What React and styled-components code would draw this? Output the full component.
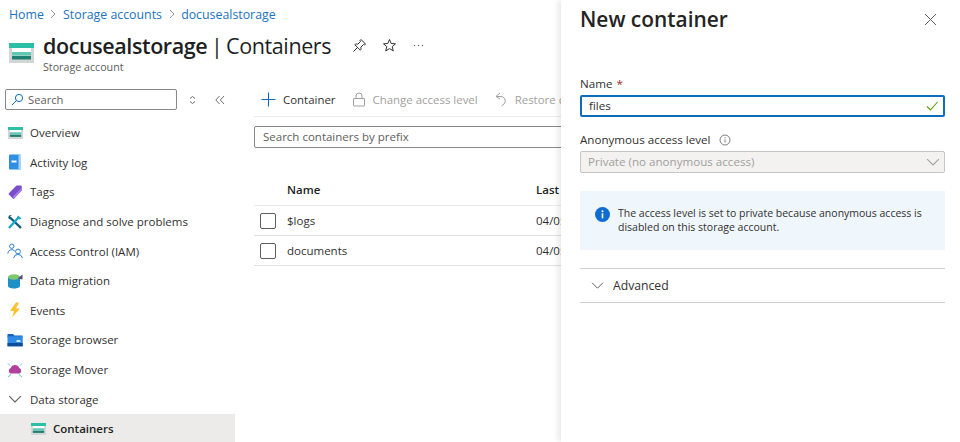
import React from 'react';
import styled, { createGlobalStyle } from 'styled-components';

const Global = createGlobalStyle`
  html, body { margin: 0; padding: 0; background: #fff; }
  * { box-sizing: border-box; }
  body { font-family: "Open Sans", "Noto Sans", "Liberation Sans", sans-serif; color: #323130; }
`;

const Page = styled.div`
  position: relative;
  width: 960px;
  height: 442px;
  overflow: hidden;
  background: #fff;
  display: flex;
  flex-direction: column;
`;
const Breadcrumb = styled.nav`
  height: 28px;
  padding-left: 9px;
  display: flex;
  align-items: center;
  gap: 5.6px;
  font-size: 12.35px;
`;
const Crumb = styled.span`color: #1b73c0;`;
const Header = styled.header`
  height: 51px;
  padding-left: 9px;
  display: flex;
  align-items: flex-start;
`;
const TitleIcon = styled.div`
  width: 25px;
  margin-top: 15px;
  margin-right: 9px;
  line-height: 0;
`;
const TitleBlock = styled.div`
  display: flex;
  flex-direction: column;
`;
const TitleRow = styled.div`
  display: flex;
  align-items: center;
  height: 35px;
`;
const Title = styled.h1`
  margin: 0;
  font-size: 21.5px;
  font-weight: 400;
  letter-spacing: -0.4px;
  word-spacing: -1.5px;
  color: #201f1e;
  white-space: nowrap;
  b { font-weight: 600; }
`;
const TitleActions = styled.div`
  display: flex;
  align-items: center;
  gap: 15px;
  margin-left: 21px;
  color: #323130;
  line-height: 0;
`;
const Subtitle = styled.div`
  font-size: 10.7px;
  color: #605e5c;
  margin-top: -3px;
`;
const Body = styled.div`
  flex: 1;
  display: flex;
  min-height: 0;
`;
const Sidebar = styled.aside`
  width: 235px;
  flex: none;
  padding-top: 10px;
`;
const SideTools = styled.div`
  display: flex;
  align-items: center;
  padding-left: 5px;
  height: 21px;
  margin-bottom: 8px;
`;
const SideSearch = styled.div`
  width: 172px;
  height: 21px;
  border: 1px solid #8a8886;
  border-radius: 2px;
  display: flex;
  align-items: center;
  gap: 4px;
  padding-left: 5px;
  font-size: 11.2px;
  color: #605e5c;
`;
const SideTool = styled.span`
  display: flex;
  margin-left: ${p => p.$gap}px;
  color: #605e5c;
`;
const NavItem = styled.div`
  height: 29.6px;
  display: flex;
  align-items: center;
  gap: 7px;
  padding-left: ${p => (p.$sub ? 30 : 7)}px;
  font-size: 11.5px;
  font-weight: ${p => (p.$active ? 600 : 400)};
  color: ${p => (p.$active ? '#201f1e' : '#323130')};
  background: ${p => (p.$active ? '#edebe9' : 'transparent')};
  white-space: nowrap;
`;
const NavIcon = styled.span`
  width: 16px;
  height: 16px;
  flex: none;
  display: flex;
  align-items: center;
  justify-content: center;
`;
const Main = styled.main`
  width: 326px;
  flex: none;
  overflow: hidden;
  padding: 0 0 0 19px;
`;
const Toolbar = styled.div`
  height: 38px;
  display: flex;
  align-items: center;
  padding: 4px 0 0 7px;
  border-bottom: 1px solid #edebe9;
  font-size: 11.45px;
  white-space: nowrap;
`;
const ToolButton = styled.span`
  display: flex;
  flex: none;
  align-items: center;
  gap: 7px;
  margin-right: 16px;
  color: ${p => (p.$disabled ? '#a19f9d' : '#323130')};
`;
const PrefixSearch = styled.div`
  margin-top: 9px;
  margin-right: -4px;
  height: 22px;
  border: 1px solid #8a8886;
  border-radius: 2px;
  padding: 0 0 1px 8px;
  display: flex;
  align-items: center;
  font-size: 11.5px;
  color: #605e5c;
`;
const Row = styled.div`
  height: ${p => (p.$head ? 58 : 30)}px;
  padding-top: ${p => (p.$head ? 25 : 0)}px;
  border-bottom: 1px solid ${p => (p.$head ? '#edebe9' : '#e1dfdd')};
  display: grid;
  grid-template-columns: 33px 249px 90px;
  align-items: center;
  font-size: 11.5px;
  white-space: nowrap;
  font-weight: ${p => (p.$head ? 600 : 400)};
  color: ${p => (p.$head ? '#201f1e' : '#323130')};
`;
const Check = styled.span`
  width: 16px;
  height: 16px;
  margin-left: 6px;
  border: 1px solid #605e5c;
  border-radius: 2px;
`;
const Panel = styled.section`
  position: absolute;
  top: 0;
  right: 0;
  bottom: 0;
  width: 399px;
  padding: 0 15px 0 19px;
  background: #fff;
  box-shadow: -3px 0 6px rgba(0, 0, 0, 0.09);
`;
const PanelHead = styled.div`
  height: 38px;
  display: flex;
  align-items: center;
  justify-content: space-between;
  margin-bottom: 36px;
`;
const PanelTitle = styled.h2`
  margin: 0;
  font-size: 20.9px;
  font-weight: 600;
  color: #252423;
`;
const Close = styled.span`
  line-height: 0;
  color: #605e5c;
  margin-right: 8px;
`;
const Label = styled.label`
  height: 21px;
  display: flex;
  align-items: center;
  gap: 4px;
  padding-bottom: 1px;
  font-size: 11.6px;
  line-height: 14px;
  color: #323130;
  i { color: #a4262c; font-style: normal; }
`;
const InfoGlyph = styled.span`
  margin-left: 5px;
  line-height: 0;
  color: #605e5c;
`;
const TextBox = styled.div`
  height: 22px;
  display: flex;
  align-items: center;
  justify-content: space-between;
  padding: 0 4px 0 7px;
  font-size: 11.6px;
  line-height: 14px;
  border-radius: 2px;
  border: ${p => (p.$disabled ? '1px solid #c8c6c4' : '2px solid #0f6cbd')};
  background: ${p => (p.$disabled ? '#f3f2f1' : '#fff')};
  color: ${p => (p.$disabled ? '#a19f9d' : '#323130')};
  margin-bottom: ${p => (p.$disabled ? 18 : 13)}px;
`;
const InfoBox = styled.div`
  height: 59px;
  background: #eff6fc;
  padding: 16px 16px 0 15px;
  display: flex;
  gap: 8px;
  font-size: 10.5px;
  line-height: 13.6px;
  color: #323130;
`;
const InfoIcon = styled.span`
  flex: none;
  line-height: 0;
`;
const Accordion = styled.div`
  margin-top: 18px;
  height: 35px;
  border-top: 1px solid #d2d0ce;
  border-bottom: 1px solid #d2d0ce;
  display: flex;
  align-items: center;
  gap: 9px;
  padding-left: 11px;
  font-size: 12.2px;
  color: #323130;
`;

const Stack = ({ size = 16 }) => (
  <svg width={size} height={size * 0.8} viewBox="0 0 25 20">
    <rect x="0" y="0" width="25" height="20" fill="#d4d6d6" />
    <rect x="0" y="0" width="25" height="5" fill="#2dbfa6" />
    <rect x="3" y="5" width="19" height="4" fill="#fff" />
    <rect x="3" y="9" width="19" height="3.500" fill="#5cc9b4" />
    <rect x="3" y="13" width="19" height="3.500" fill="#1f7f72" />
  </svg>
);
const Chevron = ({ size = 12, color = '#605e5c' }) => (
  <svg width={size} height={size} viewBox="0 0 12 12" fill="none" stroke={color} strokeWidth="0.9">
    <path d="M1 3.500 6 8.500 11 3.500" />
  </svg>
);
const icons = {
  overview: <Stack size={15} />,
  log: (
    <svg width="14" height="16" viewBox="0 0 14 16">
      <rect x="1" y="0.500" width="12" height="15" rx="1" fill="#2f8fe0" />
      <rect x="10.500" y="0.500" width="2.500" height="15" fill="#a8d3f5" />
      <rect x="3.500" y="6.500" width="5" height="2" fill="#fff" />
    </svg>
  ),
  tags: (
    <svg width="16" height="16" viewBox="0 0 16 16">
      <path d="M9.500 1.500h4.500a.7.7 0 0 1 .7.7v4.300L7.200 14.600a1 1 0 0 1-1.400 0L1.900 10.600a1 1 0 0 1 0-1.400z" fill="#7b4fc9" />
      <path d="M14.700 2.500v4L7 14.600 5.500 13l8-8z" fill="#a67af0" />
    </svg>
  ),
  diag: (
    <svg width="16" height="16" viewBox="0 0 16 16" fill="none">
      <path d="M3 3.500 14 14" stroke="#0f5a80" strokeWidth="2.400" />
      <path d="M1.200 3.200a3 3 0 0 1 3.400-2.200l-1.600 2 1.200 1.200-1 1.300a3 3 0 0 1-2-2.300z" fill="#0f5a80" />
      <path d="M2 14 12 3" stroke="#19a8c8" strokeWidth="2.400" />
      <path d="M11 1.500l3.500 3-2 1-2.500-2z" fill="#19a8c8" />
    </svg>
  ),
  iam: (
    <svg width="16" height="16" viewBox="0 0 16 16" fill="none" stroke="#2a7fd0" strokeWidth="1">
      <circle cx="4.800" cy="3.200" r="2.200" />
      <path d="M.8 10.500a4 4 0 0 1 7-2.500" />
      <circle cx="11" cy="8.500" r="2.400" />
      <path d="M6.600 15a4.500 4.500 0 0 1 8.800 0" />
    </svg>
  ),
  migrate: (
    <svg width="16" height="16" viewBox="0 0 16 16">
      <path d="M1 4v9c0 1.400 2.700 2.500 6 2.500s6-1.100 6-2.500V4z" fill="#1f8fc8" />
      <ellipse cx="7" cy="4" rx="6" ry="2.800" fill="#7ec96f" />
      <path d="M10.500 5.500 15.500 1.500v5z" fill="#5a4a7a" />
    </svg>
  ),
  events: (
    <svg width="16" height="16" viewBox="0 0 16 16">
      <path d="M9 .5 3 9h4L5 15.500 13 6.500H8.800L12 .5z" fill="#fcc12b" />
    </svg>
  ),
  browser: (
    <svg width="16" height="16" viewBox="0 0 16 16">
      <path d="M0.500 2h5.500l1.500 1.600h8v2H.5z" fill="#1565c0" />
      <rect x="0.500" y="4.300" width="15.200" height="10" fill="#2e8ce6" />
      <rect x="0.500" y="11" width="15.200" height="3.300" fill="#0f4d96" />
      <rect x="9.500" y="8" width="4" height="2" fill="#cfe6fb" />
    </svg>
  ),
  mover: (
    <svg width="16" height="16" viewBox="0 0 16 16" fill="none">
      <path d="M3.500 11.500a3 3 0 0 1 .2-5.500 4.600 4.600 0 0 1 8.600 0 3 3 0 0 1 .2 5.500z" fill="#b0419c" />
      <path d="M1 1.500 3 3.500M15 1.500 13 3.500M1 15 4 12.500M15 15 12 12.500" stroke="#45c0d8" strokeWidth="0.900" />
    </svg>
  ),
};
const nav = [
  ['overview', 'Overview'],
  ['log', 'Activity log'],
  ['tags', 'Tags'],
  ['diag', 'Diagnose and solve problems'],
  ['iam', 'Access Control (IAM)'],
  ['migrate', 'Data migration'],
  ['events', 'Events'],
  ['browser', 'Storage browser'],
  ['mover', 'Storage Mover'],
];
const CrumbSep = () => (
  <svg width="8" height="10" viewBox="0 0 8 10" fill="none" stroke="#8a8886" strokeWidth="0.9">
    <path d="M2 1l4 4-4 4" />
  </svg>
);

export default function App() {
  return (
    <Page>
      <Global />
      <Breadcrumb>
        <Crumb>Home</Crumb><CrumbSep />
        <Crumb>Storage accounts</Crumb><CrumbSep />
        <Crumb>docusealstorage</Crumb>
      </Breadcrumb>
      <Header>
        <TitleIcon><Stack size={25} /></TitleIcon>
        <TitleBlock>
          <TitleRow>
            <Title><b>docusealstorage</b> | Containers</Title>
            <TitleActions>
              <svg width="15" height="15" viewBox="0 0 15 15" fill="none" stroke="#323130" strokeWidth="1">
                <path d="M9 1.500 13.500 6 12.500 7 11.500 6.500 8.800 9.200c.5 1.400.2 2.300-.5 3L2.800 6.700c.7-.7 1.700-1 3-.5l2.700-2.700L8 2.500zM5.500 9.500 1.500 13.500" />
              </svg>
              <svg width="15" height="15" viewBox="0 0 15 15" fill="none" stroke="#323130" strokeWidth="1">
                <path d="M7.500 1.500 9.200 5.500 13.500 5.800 10.200 8.600 11.300 12.900 7.500 10.600 3.700 12.900 4.800 8.600 1.500 5.800 5.800 5.500z" />
              </svg>
              <svg width="13" height="13" viewBox="0 0 13 13" fill="#605e5c">
                <circle cx="2.500" cy="6.500" r=".7" /><circle cx="6.500" cy="6.500" r=".7" /><circle cx="10.500" cy="6.500" r=".7" />
              </svg>
            </TitleActions>
          </TitleRow>
          <Subtitle>Storage account</Subtitle>
        </TitleBlock>
      </Header>
      <Body>
        <Sidebar>
          <SideTools>
            <SideSearch>
              <svg width="13" height="13" viewBox="0 0 13 13" fill="none" stroke="#0f6cbd" strokeWidth="1">
                <circle cx="8" cy="5" r="3.600" /><path d="M5.300 7.700 1 12" />
              </svg>
              Search
            </SideSearch>
            <SideTool $gap={11}>
              <svg width="9" height="12" viewBox="0 0 9 12" fill="none" stroke="#605e5c" strokeWidth=".9">
                <path d="M2 4.500 4.500 2.500 7 4.500M2 7.500 4.500 9.500 7 7.500" />
              </svg>
            </SideTool>
            <SideTool $gap={18}>
              <svg width="10" height="10" viewBox="0 0 10 10" fill="none" stroke="#605e5c" strokeWidth=".9">
                <path d="M4.500 1 .8 5l3.700 4M9 1 5.300 5 9 9" />
              </svg>
            </SideTool>
          </SideTools>
          {nav.map(([k, t]) => (
            <NavItem key={k}><NavIcon>{icons[k]}</NavIcon>{t}</NavItem>
          ))}
          <NavItem>
            <NavIcon><Chevron size={14} /></NavIcon>Data storage
          </NavItem>
          <NavItem $sub $active>
            <NavIcon><Stack size={15} /></NavIcon>Containers
          </NavItem>
        </Sidebar>
        <Main>
          <Toolbar>
            <ToolButton>
              <svg width="15" height="15" viewBox="0 0 15 15" stroke="#0f6cbd" strokeWidth="1.100"><path d="M7.500 .5v14M.5 7.500h14" /></svg>
              Container
            </ToolButton>
            <ToolButton $disabled>
              <svg width="14" height="15" viewBox="0 0 14 15" fill="none" stroke="#a19f9d" strokeWidth="1">
                <rect x="1.500" y="6.500" width="11" height="7.500" rx=".5" /><path d="M4 6.500V4a3 3 0 0 1 6 0v2.500" />
              </svg>
              Change access level
            </ToolButton>
            <ToolButton $disabled>
              <svg width="14" height="15" viewBox="0 0 14 15" fill="none" stroke="#a19f9d" strokeWidth="1">
                <path d="M6 1 2 4.500 6 7M2.500 4.500h4.500a4.500 4.500 0 0 1 3.500 7L7.500 14" />
              </svg>
              Restore containers
            </ToolButton>
          </Toolbar>
          <PrefixSearch>Search containers by prefix</PrefixSearch>
          <Row $head><span /><span>Name</span><span>Last modified</span></Row>
          <Row><Check /><span>$logs</span><span>04/05/2024</span></Row>
          <Row><Check /><span>documents</span><span>04/05/2024</span></Row>
        </Main>
      </Body>
      <Panel>
        <PanelHead>
          <PanelTitle>New container</PanelTitle>
          <Close>
            <svg width="13" height="13" viewBox="0 0 13 13" stroke="#605e5c" strokeWidth="1"><path d="M1 1l11 11M12 1 1 12" /></svg>
          </Close>
        </PanelHead>
        <Label>Name <i>*</i></Label>
        <TextBox>
          files
          <svg width="14" height="14" viewBox="0 0 14 14" fill="none" stroke="#57a300" strokeWidth="1.100"><path d="M2 7.500 5.500 11 12.500 3" /></svg>
        </TextBox>
        <Label>
          Anonymous access level
          <InfoGlyph>
            <svg width="12" height="12" viewBox="0 0 12 12" fill="none" stroke="#605e5c" strokeWidth=".8">
              <circle cx="6" cy="6" r="5" /><path d="M6 5.200v3.300M6 3.200v1" />
            </svg>
          </InfoGlyph>
        </Label>
        <TextBox $disabled>
          Private (no anonymous access)
          <Chevron size={14} color="#a19f9d" />
        </TextBox>
        <InfoBox>
          <InfoIcon>
            <svg width="15" height="15" viewBox="0 0 15 15">
              <circle cx="7.500" cy="7.500" r="7.500" fill="#0f6cd0" />
              <rect x="6.700" y="6.300" width="1.600" height="5" fill="#fff" />
              <circle cx="7.500" cy="4.300" r="1" fill="#fff" />
            </svg>
          </InfoIcon>
          <span>The access level is set to private because anonymous access is disabled on this storage account.</span>
        </InfoBox>
        <Accordion>
          <Chevron size={13} />
          Advanced
        </Accordion>
      </Panel>
    </Page>
  );
}
